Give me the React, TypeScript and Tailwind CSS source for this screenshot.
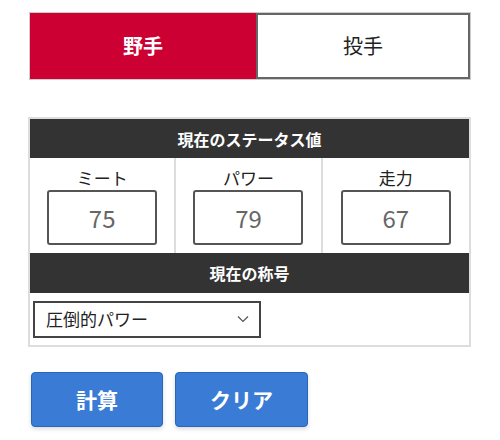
import * as React from 'react';

const stats = [
  { label: 'ミート', value: '75' },
  { label: 'パワー', value: '79' },
  { label: '走力', value: '67' },
];

export default function App() {
  return (
    <div
      className="min-h-[440px] w-[500px] bg-white pt-[12px] text-[#222]"
      style={{ fontFamily: '"Noto Sans CJK JP", "Noto Sans", sans-serif' }}
    >
      <div className="ml-[29px] flex h-[68px] w-[442px] border border-[#ccc]">
        <div className="flex w-[226px] items-center justify-center bg-[#cc0033] text-[20px] font-bold text-white">
          野手
        </div>
        <div className="flex flex-1 items-center justify-center border-2 border-[#666] bg-white text-[20px] text-[#222]">
          投手
        </div>
      </div>

      <div className="ml-[28px] mt-[37px] w-[443px] border-2 border-[#ddd]">
        <div className="flex h-[39px] items-center justify-center bg-[#333] text-[16px] font-bold text-white">
          現在のステータス値
        </div>
        <div className="grid h-[95px] grid-cols-3">
          {stats.map((s, i) => (
            <div
              key={s.label}
              className={`flex flex-col items-center pt-[9px] ${i < 2 ? 'border-r-2 border-[#ddd]' : ''}`}
            >
              <span className="text-[17px] leading-[22px]">{s.label}</span>
              <div className="mt-[1px] flex h-[55px] w-[110px] items-center justify-center rounded-[3px] border-2 border-[#555] text-[24px] text-[#666]">
                {s.value}
              </div>
            </div>
          ))}
        </div>
        <div className="flex h-[40px] items-center justify-center bg-[#333] text-[16px] font-bold text-white">
          現在の称号
        </div>
        <div className="flex h-[52px] items-center pl-[3px]">
          <div className="flex h-[37px] w-[228px] items-center justify-between border-2 border-[#444] pl-[11px] pr-[10px] text-[17px]">
            <span>圧倒的パワー</span>
            <svg width="12" height="8" viewBox="0 0 12 8" fill="none" stroke="#555" strokeWidth="1.2">
              <path d="M1 1.5 L6 6.5 L11 1.5" />
            </svg>
          </div>
        </div>
      </div>

      <div className="ml-[31px] mt-[25px] flex gap-[12px]">
        <button className="flex h-[55px] w-[132px] items-center justify-center rounded-[4px] border border-[#2a66b8] bg-[#3a7bd5] text-[21px] font-bold text-white shadow-[0_2px_4px_rgba(0,0,0,0.15)]">
          計算
        </button>
        <button className="flex h-[55px] w-[133px] items-center justify-center rounded-[4px] border border-[#2a66b8] bg-[#3a7bd5] text-[21px] font-bold text-white shadow-[0_2px_4px_rgba(0,0,0,0.15)]">
          クリア
        </button>
      </div>
    </div>
  );
}
